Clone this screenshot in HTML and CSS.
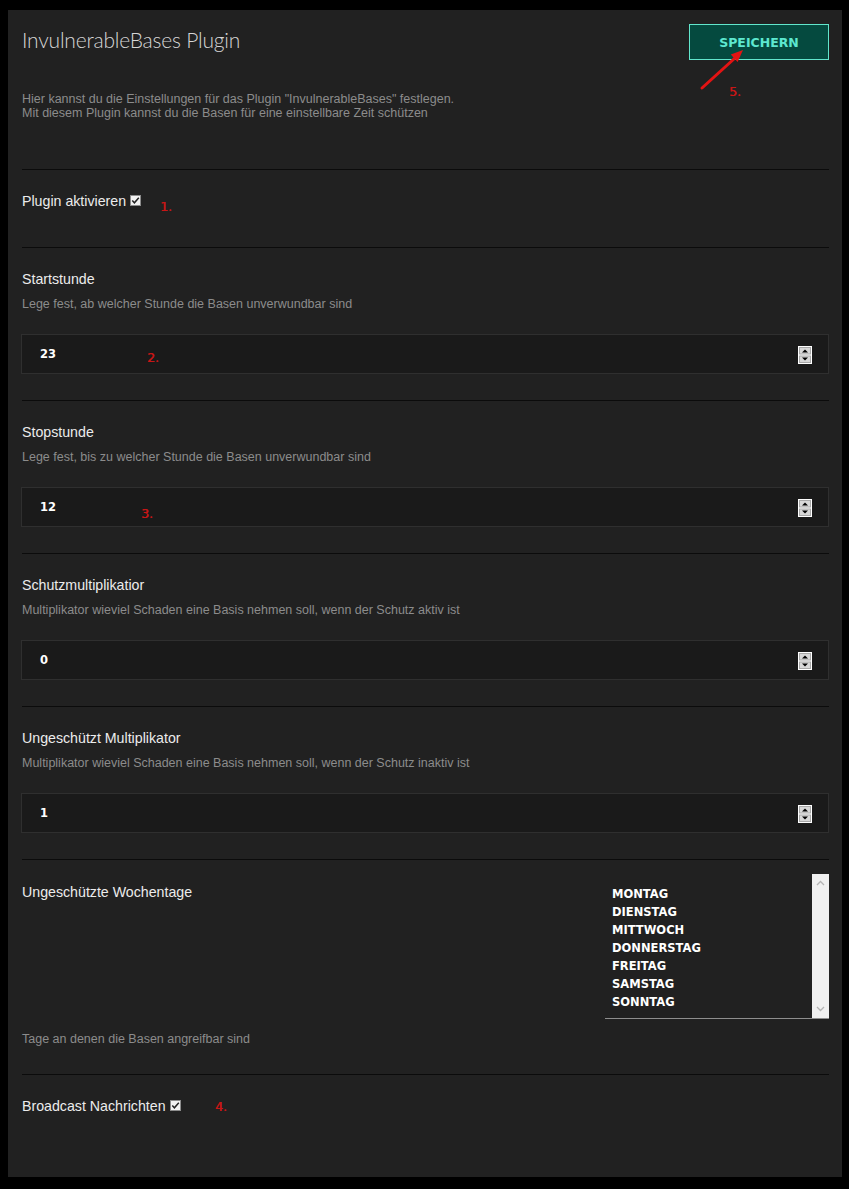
FILE: index.html
```html
<!DOCTYPE html>
<html lang="de">
<head>
    <meta charset="UTF-8">
    <meta name="viewport" content="width=device-width, initial-scale=1.0">
    <title>InvulnerableBases Plugin</title>

    <link rel="stylesheet" href="styles.css">
</head>
<body>

    <div class="panel">
        <div class="head">
            <h1 class="title">InvulnerableBases Plugin</h1>
            <button class="save">SPEICHERN</button>
        </div>
        <p class="intro">
            Hier kannst du die Einstellungen für das Plugin "InvulnerableBases" festlegen.<br>
            Mit diesem Plugin kannst du die Basen für eine einstellbare Zeit schützen
        </p>

        <div class="section toggle">
            <span class="label">Plugin aktivieren</span>
            <svg class="check" width="11" height="11" viewBox="0 0 11 11">
                <rect x="0.5" y="0.5" width="10" height="10" fill="#f2f2f2" stroke="#8c8c8c"/>
                <path d="M2.3 5.6 4.4 7.8 8.8 2.8" fill="none" stroke="#222" stroke-width="1.5"/>
            </svg>
        </div>

        <div class="section">
            <div class="label">Startstunde</div>
            <div class="hint">Lege fest, ab welcher Stunde die Basen unverwundbar sind</div>
            <div class="num">
                <span>23</span>
                <svg class="spin" width="14" height="18" viewBox="0 0 14 18">
                    <rect width="14" height="18" fill="#fff"/>
                    <rect x="1.5" y="1.5" width="11" height="6.5" fill="#d8d8d8" stroke="#a8a8a8"/>
                    <rect x="1.5" y="10" width="11" height="6.5" fill="#d8d8d8" stroke="#a8a8a8"/>
                    <path d="M4 6.5h6L7 3.5z" fill="#000"/>
                    <path d="M4 11.5h6L7 14.5z" fill="#000"/>
                </svg>
            </div>
        </div>

        <div class="section">
            <div class="label">Stopstunde</div>
            <div class="hint">Lege fest, bis zu welcher Stunde die Basen unverwundbar sind</div>
            <div class="num">
                <span>12</span>
                <svg class="spin" width="14" height="18" viewBox="0 0 14 18">
                    <rect width="14" height="18" fill="#fff"/>
                    <rect x="1.5" y="1.5" width="11" height="6.5" fill="#d8d8d8" stroke="#a8a8a8"/>
                    <rect x="1.5" y="10" width="11" height="6.5" fill="#d8d8d8" stroke="#a8a8a8"/>
                    <path d="M4 6.5h6L7 3.5z" fill="#000"/>
                    <path d="M4 11.5h6L7 14.5z" fill="#000"/>
                </svg>
            </div>
        </div>

        <div class="section">
            <div class="label">Schutzmultiplikatior</div>
            <div class="hint">Multiplikator wieviel Schaden eine Basis nehmen soll, wenn der Schutz aktiv ist</div>
            <div class="num">
                <span>0</span>
                <svg class="spin" width="14" height="18" viewBox="0 0 14 18">
                    <rect width="14" height="18" fill="#fff"/>
                    <rect x="1.5" y="1.5" width="11" height="6.5" fill="#d8d8d8" stroke="#a8a8a8"/>
                    <rect x="1.5" y="10" width="11" height="6.5" fill="#d8d8d8" stroke="#a8a8a8"/>
                    <path d="M4 6.5h6L7 3.5z" fill="#000"/>
                    <path d="M4 11.5h6L7 14.5z" fill="#000"/>
                </svg>
            </div>
        </div>

        <div class="section">
            <div class="label">Ungeschützt Multiplikator</div>
            <div class="hint">Multiplikator wieviel Schaden eine Basis nehmen soll, wenn der Schutz inaktiv ist</div>
            <div class="num">
                <span>1</span>
                <svg class="spin" width="14" height="18" viewBox="0 0 14 18">
                    <rect width="14" height="18" fill="#fff"/>
                    <rect x="1.5" y="1.5" width="11" height="6.5" fill="#d8d8d8" stroke="#a8a8a8"/>
                    <rect x="1.5" y="10" width="11" height="6.5" fill="#d8d8d8" stroke="#a8a8a8"/>
                    <path d="M4 6.5h6L7 3.5z" fill="#000"/>
                    <path d="M4 11.5h6L7 14.5z" fill="#000"/>
                </svg>
            </div>
        </div>

        <div class="section days">
            <div class="days-row">
                <div class="label">Ungeschützte Wochentage</div>
                <div class="daylist">
                    <ul>
                        <li>MONTAG</li>
                        <li>DIENSTAG</li>
                        <li>MITTWOCH</li>
                        <li>DONNERSTAG</li>
                        <li>FREITAG</li>
                        <li>SAMSTAG</li>
                        <li>SONNTAG</li>
                    </ul>
                    <div class="scrollbar">
                        <svg width="17" height="14" viewBox="0 0 17 14"><path d="M5 9 8.5 5.5 12 9" fill="none" stroke="#b4b4b4" stroke-width="1.3"/></svg>
                        <svg width="17" height="14" viewBox="0 0 17 14"><path d="M5 5 8.5 8.5 12 5" fill="none" stroke="#b4b4b4" stroke-width="1.3"/></svg>
                    </div>
                </div>
            </div>
            <div class="hint">Tage an denen die Basen angreifbar sind</div>
        </div>

        <div class="section toggle last">
            <span class="label">Broadcast Nachrichten</span>
            <svg class="check" width="11" height="11" viewBox="0 0 11 11">
                <rect x="0.5" y="0.5" width="10" height="10" fill="#f2f2f2" stroke="#8c8c8c"/>
                <path d="M2.3 5.6 4.4 7.8 8.8 2.8" fill="none" stroke="#222" stroke-width="1.5"/>
            </svg>
        </div>

        <!-- rote Markierungen -->
        <span class="mark m1">1.</span>
        <span class="mark m2">2.</span>
        <span class="mark m3">3.</span>
        <span class="mark m4">4.</span>
        <span class="mark m5">5.</span>
        <svg class="arrow" width="50" height="50" viewBox="0 0 50 50">
            <line x1="4" y1="42" x2="37" y2="12" stroke="#e31313" stroke-width="3" stroke-linecap="round"/>
            <path d="M45 4 39.6 15.9 32.8 8.5z" fill="#e31313"/>
        </svg>
    </div>

</body>
</html>
```

FILE: styles.css
```css
body{
    margin: 0;
    padding: 10px 7px 12px 8px;
    background: #000;
    font-family: "Liberation Sans", Arial, sans-serif;
}

.panel{
    position: relative;
    background: #212121;
    padding: 14px 13px 0 14px;
}

.head{
    display: flex;
    justify-content: space-between;
    align-items: flex-start;
}

.title{
    margin: 4px 0 0 0;
    font-family: Lato, "Open Sans", sans-serif;
    font-weight: 300;
    font-size: 21px;
    line-height: 24px;
    color: #d6d6d6;
    letter-spacing: -0.2px;
}

.save{
    width: 140px;
    height: 36px;
    background: #054a3f;
    border: 1px solid #62e6cc;
    color: #5de8d0;
    font-family: "DejaVu Sans", Verdana, sans-serif;
    font-weight: bold;
    font-size: 12.5px;
    padding: 0;
}

.intro{
    margin: 32px 0 49px 0;
    font-size: 12.5px;
    line-height: 14px;
    color: #8c8c8c;
}

.section{
    border-top: 1px solid #0b0b0b;
    padding: 23px 0 26px 0;
}

.label{
    font-size: 14.2px;
    line-height: 16px;
    color: #ececec;
}

.hint{
    margin-top: 9px;
    font-size: 12.5px;
    line-height: 16px;
    color: #8c8c8c;
}

.toggle{
    display: flex;
    align-items: center;
    padding-bottom: 38px;
}

.toggle .check{
    margin-left: 4px;
    margin-top: -2px;
}

.toggle.last{
    padding-bottom: 63px;
}

.num{
    margin: 22px 0 0 -1px;
    height: 38px;
    border: 1px solid #2f2f2f;
    background: #1a1a1a;
    display: flex;
    align-items: center;
    justify-content: space-between;
    padding: 0 16px 0 18px;
}

.num span{
    font-family: "DejaVu Sans", Verdana, sans-serif;
    font-weight: bold;
    font-size: 11.5px;
    color: #fff;
}

.spin{
    margin-top: 1px;
}

.days{
    padding-top: 14px;
    padding-bottom: 27px;
}

.days-row{
    display: flex;
    justify-content: space-between;
    align-items: flex-start;
}

.days-row .label{
    margin-top: 10px;
}

.daylist{
    width: 224px;
    height: 144px;
    border-bottom: 1px solid #8e8e8e;
    display: flex;
}

.daylist ul{
    flex: 1;
    list-style: none;
    margin: 0;
    padding: 11px 0 0 7px;
}

.daylist li{
    font-family: "DejaVu Sans", Verdana, sans-serif;
    font-weight: bold;
    font-size: 11.5px;
    line-height: 18px;
    color: #fff;
}

.scrollbar{
    width: 17px;
    background: #f0f0f0;
    display: flex;
    flex-direction: column;
    justify-content: space-between;
    padding: 2px 0;
}

.days .hint{
    margin-top: 12px;
}

.mark{
    position: absolute;
    font-family: "DejaVu Sans", Verdana, sans-serif;
    font-size: 12.5px;
    line-height: 16px;
    color: #c81616;
    text-shadow: 0.4px 0 0 #c81616;
}

.m1{ left: 152px; top: 189px; }
.m2{ left: 139px; top: 340px; }
.m3{ left: 133px; top: 496px; }
.m4{ left: 207px; top: 1089px; }
.m5{ left: 721px; top: 74px; }

.arrow{
    position: absolute;
    left: 690px;
    top: 36px;
}
```
